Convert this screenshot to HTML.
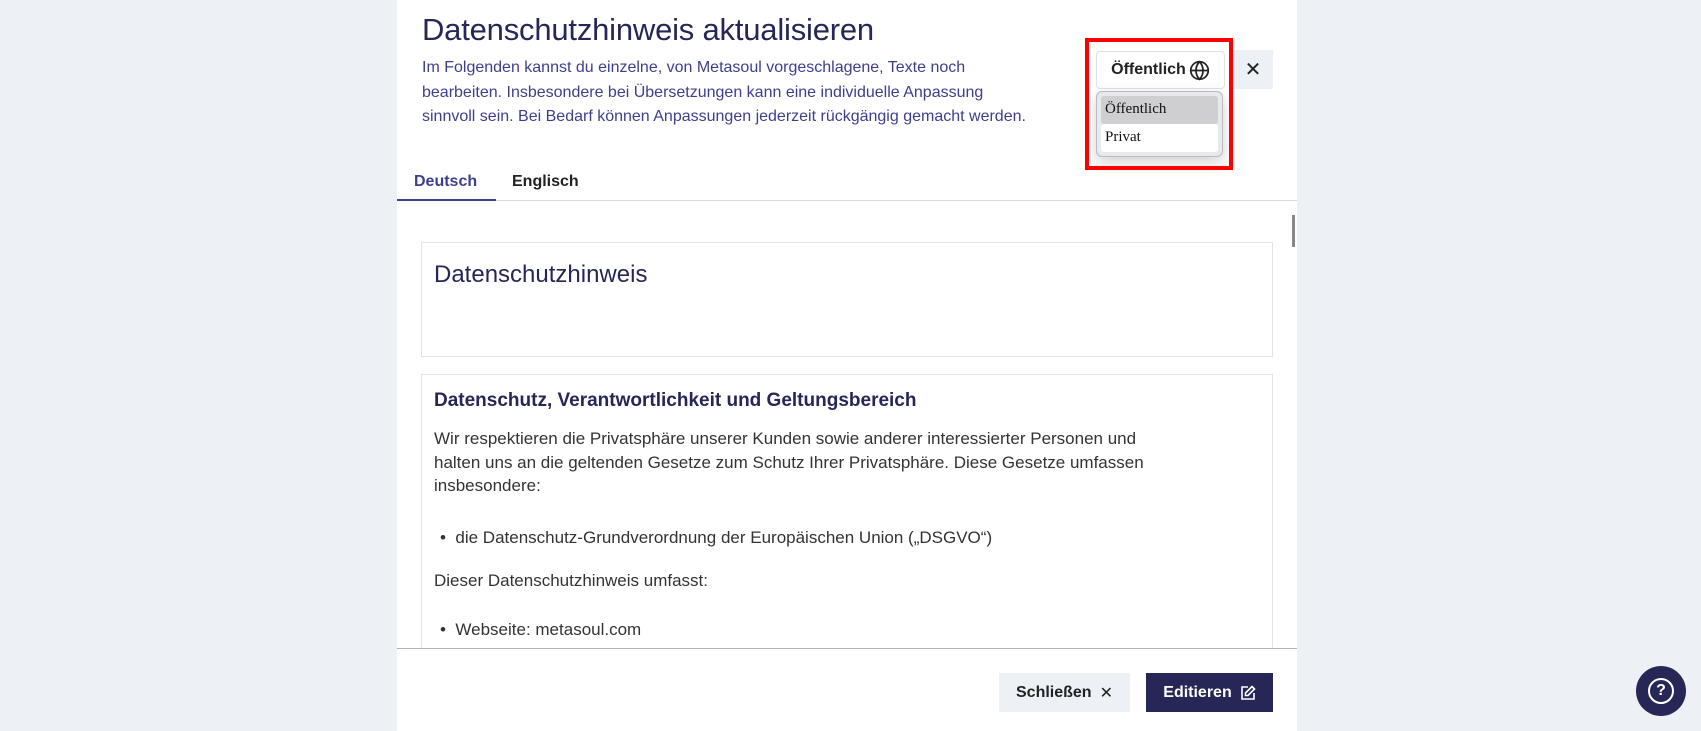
<!DOCTYPE html>
<html><head><meta charset="utf-8"><style>
*{box-sizing:border-box;margin:0;padding:0}
body{width:1701px;height:731px;background:#edf1f6;font-family:"Liberation Sans",sans-serif;position:relative;overflow:hidden}
.panel{position:absolute;left:397px;top:0;width:900px;height:731px;background:#fff}
.abs{position:absolute}
h1{position:absolute;left:25px;top:12px;font-size:31px;font-weight:normal;color:#262757;letter-spacing:-0.2px}
.desc{left:25px;top:56px;width:625px;font-size:16px;line-height:24.5px;color:#3d3f8e}
.tabs{left:0;top:200px;width:900px;border-top:1px solid #d5d9e0}
.tab{top:173px;font-size:16px;font-weight:bold;color:#222}
.card{border:1px solid #e1e3e8;left:24px;width:852px}
.txt{font-size:17px;color:#333;line-height:23.5px}
.btn{font-size:16px;font-weight:bold;display:flex;align-items:center;justify-content:center;gap:8px}
</style></head><body>
<div class="panel">
<h1>Datenschutzhinweis aktualisieren</h1>
<div class="abs desc">Im Folgenden kannst du einzelne, von Metasoul vorgeschlagene, Texte noch<br>bearbeiten. Insbesondere bei Übersetzungen kann eine individuelle Anpassung<br>sinnvoll sein. Bei Bedarf können Anpassungen jederzeit rückgängig gemacht werden.</div>
<div class="abs tab" style="left:17px;color:#3d3f8e">Deutsch</div>
<div class="abs tab" style="left:115px">Englisch</div>
<div class="abs tabs"></div>
<div class="abs" style="left:0;top:199px;width:99px;height:2px;background:#3d3f8e"></div>
<div class="abs" style="left:895px;top:215px;width:3px;height:32px;background:#888"></div>
<div class="abs card" style="top:242px;height:115px"><div class="abs" style="left:12px;top:18px;font-size:24px;color:#262757">Datenschutzhinweis</div></div>
<div class="abs card" style="top:374px;height:280px;border-bottom:none;overflow:hidden">
<div class="abs" style="left:12px;top:15px;font-size:19px;color:#262757;font-weight:bold">Datenschutz, Verantwortlichkeit und Geltungsbereich</div>
<div class="abs txt" style="left:12px;top:52px;width:720px">Wir respektieren die Privatsphäre unserer Kunden sowie anderer interessierter Personen und halten uns an die geltenden Gesetze zum Schutz Ihrer Privatsphäre. Diese Gesetze umfassen insbesondere:</div>
<div class="abs txt" style="left:18px;top:151px">•&nbsp; die Datenschutz-Grundverordnung der Europäischen Union („DSGVO“)</div>
<div class="abs txt" style="left:12px;top:194px">Dieser Datenschutzhinweis umfasst:</div>
<div class="abs txt" style="left:18px;top:243px">•&nbsp; Webseite: metasoul.com</div>
</div>
<div class="abs" style="left:0;top:648px;width:900px;height:83px;background:#fff;border-top:1px solid #aeb4bd"></div>
<div class="abs btn" style="left:602px;top:673px;width:131px;height:39px;background:#edf1f6;color:#222">Schließen <span style="font-weight:normal">✕</span></div>
<div class="abs btn" style="left:749px;top:673px;width:127px;height:39px;background:#262757;color:#fff">Editieren
<svg width="16" height="16" viewBox="0 0 16 16" fill="none" stroke="#fff" stroke-width="1.6"><path d="M8 2H2v12h12V8"/><path d="M12 1.5l2.5 2.5L8 10.5H5.5V8z"/></svg></div>
<div class="abs" style="left:836px;top:50px;width:40px;height:39px;background:#edf1f6;display:flex;align-items:center;justify-content:center;font-size:20px;color:#222">✕</div>
<div class="abs" style="left:699px;top:51px;width:129px;height:38px;border:1px solid #dde1e8;border-radius:4px;background:#fff;display:flex;align-items:center;justify-content:center;gap:3px;font-size:16px;font-weight:bold;color:#222">Öffentlich
<svg width="21" height="21" viewBox="0 0 24 24" fill="none" stroke="#222" stroke-width="2"><circle cx="12" cy="12" r="10"/><path d="M2 12h20M12 2c3 3 4 7 4 10s-1 7-4 10c-3-3-4-7-4-10s1-7 4-10z"/></svg></div>
<div class="abs" style="left:699px;top:91px;width:127px;height:66px;background:#e8e8ee;border:1px solid #bbb;border-radius:6px;box-shadow:0 6px 16px rgba(0,0,0,.18);padding:4px;font-family:'Liberation Serif',serif;font-size:15px;color:#111">
<div style="height:28px;background:#cfcfd2;border-radius:3px;padding:5px 4px">Öffentlich</div>
<div style="height:28px;background:#fff;border-radius:3px;padding:5px 4px">Privat</div>
</div>
<div class="abs" style="left:688px;top:38px;width:148px;height:132px;border:4px solid #f00"></div>
</div>
<div class="abs" style="left:1636px;top:666px;width:50px;height:50px;border-radius:50%;background:#262757;display:flex;align-items:center;justify-content:center">
<div style="width:26px;height:26px;border:2.5px solid #fff;border-radius:50%;color:#fff;font-weight:bold;font-size:16px;text-align:center;line-height:21px">?</div></div>
</body></html>
